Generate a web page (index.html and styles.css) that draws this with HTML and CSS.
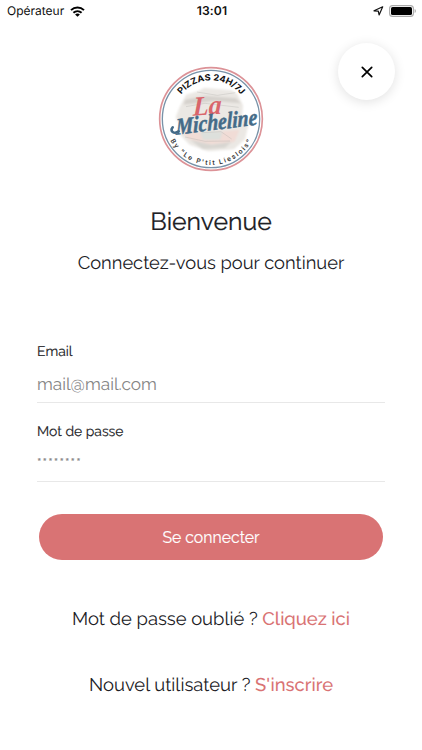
FILE: index.html
```
<!DOCTYPE html>
<html lang="fr">
<head>
<meta charset="utf-8">
<meta name="viewport" content="width=device-width, initial-scale=1">
<title>Bienvenue</title>
<link rel="stylesheet" href="styles.css">
</head>
<body>
<div class="screen">
  <header class="status">
    <div class="carrier">
      <span>Opérateur</span>
      <svg width="15" height="11" viewBox="0 0 15 11"><g fill="none" stroke="#000" stroke-width="2"><path d="M1 4.1C4.7.5 10.3.5 14 4.1"/><path d="M3.4 6.7c2.4-2.1 5.8-2.1 8.2 0"/></g><path d="M5.1 8.4c1.4-1.1 3.4-1.1 4.8 0L7.5 10.8z"/></svg>
    </div>
    <time>13:01</time>
    <div class="indicators">
      <svg width="11" height="10" viewBox="0 0 11 10"><path d="M1 4.8 9.7.8 6.1 9 5.3 5.2z" fill="none" stroke="#111" stroke-width="1.2" stroke-linejoin="round"/></svg>
      <svg width="28" height="12" viewBox="0 0 28 12"><rect x=".6" y=".6" width="23.8" height="10.8" rx="3" fill="#fff" stroke="#aaa" stroke-width="1.1"/><rect x="2" y="2" width="21" height="8" rx="1.6"/><path d="M25.7 4v4c1.4-.5 1.4-3.5 0-4" fill="#999"/></svg>
    </div>
  </header>
  <button class="close" aria-label="Fermer"><svg width="12" height="12" viewBox="0 0 12 12"><path d="m1.3 1.3 9.4 9.4m0-9.4-9.4 9.4" stroke="#000" stroke-width="1.7" stroke-linecap="round"/></svg></button>
  <main>
    <svg class="logo" viewBox="0 0 366 366">
      <defs>
        <path id="arc-top" d="M67 183a116 116 0 0 1 232 0"/>
        <path id="arc-bottom" d="M45 183a138 138 0 0 0 276 0"/>
        <filter id="soft" x="-10%" y="-10%" width="120%" height="120%"><feGaussianBlur stdDeviation="3"/></filter>
      </defs>
      <circle cx="183" cy="183" r="154" fill="#fff" stroke="#dc9297" stroke-width="5"/>
      <circle cx="183" cy="183" r="146" fill="none" stroke="#7892a8" stroke-width="4"/>
      <g filter="url(#soft)">
        <path d="M108 110l35-10 20-11 82 8 17 12 17 33-3 35 20 22-11 45-33 30-78 6-55-20-28-28-2-30-12-25 12-30z" fill="#ebe8e4"/>
        <path d="M105 125l62-12 90 8 16 15-80-7-92 11z" fill="#d6d2cd"/>
        <path d="M93 212l70 12 106-9-16 37-73 7-66-16z" fill="#f1dcd6"/>
        <path d="M150 221h68l-7 24-52 1z" fill="#dde0dc"/>
        <path d="M121 245l64 15 60-9-20 18-67 5z" fill="#d8d6d1"/>
      </g>
      <g fill="none" stroke="#aaa8a4" stroke-width="3" opacity=".3"><path d="M141 102l61 10 54-8M108 146l57-10 101 12M155 224l58-3 32 22M105 237l60 13 75-1"/></g>
      <text class="logo-top"><textPath href="#arc-top" startOffset="79" textLength="207" lengthAdjust="spacingAndGlyphs">PIZZAS 24H/7J</textPath></text>
      <text class="logo-la" transform="translate(128 173) rotate(-4) skewX(-6)" textLength="86" lengthAdjust="spacingAndGlyphs">La</text>
      <text class="logo-name" transform="translate(78 230) rotate(-7) skewX(-6)" textLength="246" lengthAdjust="spacingAndGlyphs">Micheline</text>
      <path d="M86 220c-14 10-28-1-18-12" fill="none" stroke-width="8" stroke="#446b88" stroke-linecap="round"/>
      <text class="logo-bottom"><textPath href="#arc-bottom" startOffset="67" textLength="298">By "Le P'tit Lieslois"</textPath></text>
    </svg>
    <h1>Bienvenue</h1>
    <p class="subtitle">Connectez-vous pour continuer</p>
    <form>
      <label class="field"><span class="label">Email</span><span class="value">mail@mail.com</span></label>
      <label class="field password"><span class="label">Mot de passe</span><span class="value stars">********</span></label>
      <button type="button" class="submit">Se connecter</button>
    </form>
    <p class="link forgot">Mot de passe oublié ? <a>Cliquez ici</a></p>
    <p class="link signup">Nouvel utilisateur ? <a>S'inscrire</a></p>
  </main>
</div>
</body>
</html>
```
FILE: styles.css
```
* { box-sizing: border-box; }
body { margin: 0; background: #fff; color: #202024; font-family: Raleway, Lato, sans-serif; text-rendering: geometricPrecision; }
.screen { position: relative; width: 422px; height: 750px; overflow: hidden; }
.status { height: 22px; display: grid; grid-template-columns: 1fr auto 1fr; grid-template-rows: 22px; align-items: center; padding: 0 5px 0 7px; font: 12px/22px Inter, sans-serif; color: #111; }
.carrier, .indicators { display: flex; align-items: center; gap: 6px; }
.indicators { justify-content: flex-end; gap: 5px; }
.status time { font-weight: 600; font-size: 12.2px; letter-spacing: .1px; }
.close { position: absolute; left: 338px; top: 43px; width: 57px; height: 57px; border: 0; border-radius: 50%; padding: 0; background: #fff; box-shadow: 0 2px 12px rgba(0,0,0,.12); display: flex; align-items: center; justify-content: center; }
main { display: flex; flex-direction: column; align-items: center; padding-top: 36px; }
.logo { width: 122px; height: 122px; flex: none; overflow: visible; }
.logo-top { font: 700 26px Inter, sans-serif; fill: #111; }
.logo-bottom { font: 600 20px Inter, sans-serif; fill: #333; }
.logo-la { font: italic 700 82px "Liberation Serif", serif; fill: #d9656b; }
.logo-name { font: italic 700 70px "Liberation Serif", serif; fill: #446b88; stroke: #446b88; stroke-width: 1.5; }
h1 { margin: 26px 0 0; height: 32px; font-size: 24.8px; line-height: 32px; font-weight: 400; -webkit-text-stroke: .2px; }
p { margin: 0; white-space: nowrap; }
.subtitle { margin-top: 13px; font-size: 18.3px; line-height: 26px; }
form { width: 348px; margin-top: 66px; display: flex; flex-direction: column; }
.field { height: 60px; display: flex; flex-direction: column; border-bottom: 1px solid #e8e8e8; }
.label { font-size: 13.9px; line-height: 18px; -webkit-text-stroke: .15px; }
.value { margin-top: 12px; font-size: 17.2px; line-height: 24px; color: #858585; }
.password { margin-top: 20px; height: 59px; }
.stars { margin-top: 11px; font-size: 14px; letter-spacing: 1.1px; -webkit-text-stroke: .2px; }
.submit { width: 344px; height: 46px; margin: 32.4px auto 0; border: 0; border-radius: 23px; background: #d97374; color: #fff; font: 15.8px Raleway, Lato, sans-serif; -webkit-text-stroke: .15px; }
.link { font-size: 18.4px; line-height: 26px; }
.link a { color: #d97374; font-weight: 500; }
.forgot { margin-top: 46.6px; }
.signup { margin-top: 40px; }
```
